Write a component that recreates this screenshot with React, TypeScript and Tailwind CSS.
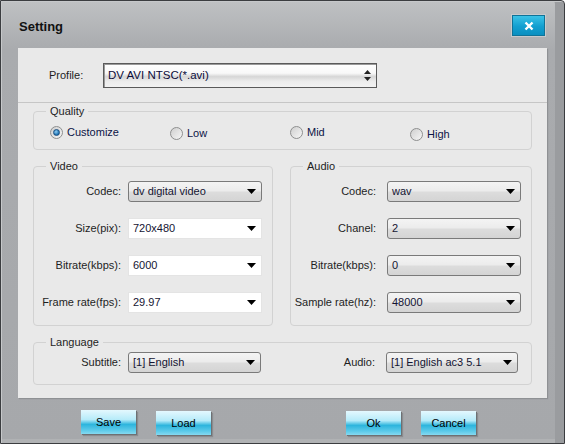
import React from 'react';

const font = { fontFamily: '"Liberation Sans", Arial, sans-serif' };

function Arrow() {
  return (
    <svg width="9" height="5" viewBox="0 0 9 5" className="shrink-0">
      <path d="M0 0h9L4.5 5z" fill="#000" />
    </svg>
  );
}

function Combo({ value, white, width = 'w-[134px]' }: { value: string; white?: boolean; width?: string }) {
  return (
    <div
      className={
        width +
        ' h-[21px] flex items-center justify-between pl-[4px] pr-[5px] text-[11px] ' +
        (white
          ? 'bg-white border border-[#e4e4e4] text-[#141432]'
          : 'rounded-[3px] border border-[#7a7a7a] bg-[linear-gradient(#f4f4f4_0%,#ececec_45%,#dcdcdc_55%,#d4d4d4_100%)] text-[#141432]')
      }
    >
      <span>{value}</span>
      <Arrow />
    </div>
  );
}

function Radio({ label, checked, className = '' }: { label: string; checked?: boolean; className?: string }) {
  return (
    <div className={'flex items-center gap-[4px] ' + className}>
      <div className="w-[13px] h-[13px] rounded-full border border-[#8e8f8f] bg-[linear-gradient(135deg,#cfcfcf,#f6f6f6)] flex items-center justify-center">
        {checked && (
          <div className="w-[7px] h-[7px] rounded-full bg-[radial-gradient(circle_at_40%_35%,#8ecdf3,#1a6fb0_70%)] border border-[#1b4f80]" />
        )}
      </div>
      <span className="text-[11px] text-[#0c1446]">{label}</span>
    </div>
  );
}

function Group({ title, className, children }: { title: string; className: string; children: React.ReactNode }) {
  return (
    <fieldset className={'border border-[#d2d2d2] rounded-[4px] ' + className}>
      <legend className="ml-[12px] px-[4px] text-[11px] leading-[13px] text-[#1e1e1e]">{title}</legend>
      {children}
    </fieldset>
  );
}

function Row({ label, labelW, gap, children }: { label: string; labelW: string; gap: string; children: React.ReactNode }) {
  return (
    <div className={'flex items-center ' + gap}>
      <span className={labelW + ' text-right text-[11px] text-[#1e1e1e]'}>{label}</span>
      {children}
    </div>
  );
}

function Btn({ label }: { label: string }) {
  return (
    <button className="w-[55px] h-[24px] text-[11px] text-black bg-[linear-gradient(#e4f8fe_0%,#b6ebf9_40%,#2db5dd_60%,#5ecbea_85%,#86d9f0_100%)] shadow-[1px_1px_0_#6e7073,2px_2px_1px_#8a8c8f]">
      {label}
    </button>
  );
}

export default function App() {
  return (
    <div style={font} className="w-[565px] h-[445px] overflow-hidden bg-white">
      <div className="relative w-[565px] h-[444px] border border-[#3b3d40] rounded-tr-[4px] bg-[linear-gradient(#bfc1c3_0px,#a9abae_48px,#a6a8ab_100%)] shadow-[inset_1px_1px_0_#c6c8ca,inset_-9px_0_0_#9a9c9f,inset_0_-4px_0_#b0b2b4] flex flex-col">
        {/* title bar */}
        <div className="h-[47px] flex items-start justify-between pl-[18px] pr-[19px]">
          <span className="mt-[16px] text-[13px] font-bold text-[#111]">Setting</span>
          <button className="mt-[14px] w-[33px] h-[21px] border border-[#0f7398] bg-[linear-gradient(#3bc2e6,#129fd0_55%,#0a8fc0)] shadow-[0_0_0_1px_#c8cacc] flex items-center justify-center">
            <svg width="10" height="10" viewBox="0 0 10 10">
              <path d="M1.5 1.5l7 7M8.5 1.5l-7 7" stroke="#fff" strokeWidth="2.4" />
            </svg>
          </button>
        </div>

        {/* content panel */}
        <div className="ml-[17px] w-[529px] h-[350px] bg-[#e9e9e9] flex flex-col shadow-[1px_1px_1px_#8f9194]">
          <div className="h-[55px] flex items-center border-b border-[#c6c6c6] pt-[1px]">
            <span className="ml-[31px] w-[54px] text-[11px] text-[#1e1e1e]">Profile:</span>
            <div className="w-[274px] h-[25px] border border-[#5a5a5a] shadow-[inset_1px_1px_0_#9a9a9a] bg-[linear-gradient(#ffffff_0%,#f8f8f8_40%,#d6d6d6_55%,#ececec_75%,#f2f2f2_100%)] flex items-center justify-between pl-[4px] pr-[5px]">
              <span className="text-[11.5px] text-[#0c0c3a]">DV AVI NTSC(*.avi)</span>
              <svg width="7" height="11" viewBox="0 0 7 11">
                <path d="M0 4L3.5 0L7 4z M0 7h7L3.5 11z" fill="#222" />
              </svg>
            </div>
          </div>

          <div className="px-[15px] flex flex-col">
            <Group title="Quality" className="mt-[2px] h-[45px]">
              <div className="flex items-start pl-[16px] pt-[6px]">
                <Radio label="Customize" checked className="w-[120px]" />
                <Radio label="Low" className="w-[120px] mt-[1px]" />
                <Radio label="Mid" className="w-[120px]" />
                <Radio label="High" className="mt-[2px]" />
              </div>
            </Group>

            <div className="flex gap-[17px] mt-[10px]">
              <Group title="Video" className="w-[240px] h-[166px]">
                <div className="flex flex-col gap-[16px] pt-[8px]">
                  <Row label="Codec:" labelW="w-[87px]" gap="gap-[7px]">
                    <Combo value="dv digital video" />
                  </Row>
                  <Row label="Size(pix):" labelW="w-[87px]" gap="gap-[7px]">
                    <Combo value="720x480" white />
                  </Row>
                  <Row label="Bitrate(kbps):" labelW="w-[87px]" gap="gap-[7px]">
                    <Combo value="6000" white />
                  </Row>
                  <Row label="Frame rate(fps):" labelW="w-[87px]" gap="gap-[7px]">
                    <Combo value="29.97" white />
                  </Row>
                </div>
              </Group>

              <Group title="Audio" className="w-[242px] h-[166px]">
                <div className="flex flex-col gap-[16px] pt-[8px]">
                  <Row label="Codec:" labelW="w-[85px]" gap="gap-[11px]">
                    <Combo value="wav" />
                  </Row>
                  <Row label="Chanel:" labelW="w-[85px]" gap="gap-[11px]">
                    <Combo value="2" />
                  </Row>
                  <Row label="Bitrate(kbps):" labelW="w-[85px]" gap="gap-[11px]">
                    <Combo value="0" />
                  </Row>
                  <Row label="Sample rate(hz):" labelW="w-[85px]" gap="gap-[11px]">
                    <Combo value="48000" />
                  </Row>
                </div>
              </Group>
            </div>

            <Group title="Language" className="mt-[10px] h-[49px]">
              <div className="flex items-center pt-[3px]">
                <Row label="Subtitle:" labelW="w-[87px]" gap="gap-[7px]">
                  <Combo value="[1] English" width="w-[133px]" />
                </Row>
                <Row label="Audio:" labelW="w-[114px]" gap="gap-[11px]">
                  <Combo value="[1] English ac3 5.1" width="w-[132px]" />
                </Row>
              </div>
            </Group>
          </div>
        </div>

        {/* buttons */}
        <div className="flex mt-[12px] pl-[80px]">
          <Btn label="Save" />
          <div className="ml-[20px]">
            <Btn label="Load" />
          </div>
          <div className="ml-[135px]">
            <Btn label="Ok" />
          </div>
          <div className="ml-[20px]">
            <Btn label="Cancel" />
          </div>
        </div>
      </div>
    </div>
  );
}
